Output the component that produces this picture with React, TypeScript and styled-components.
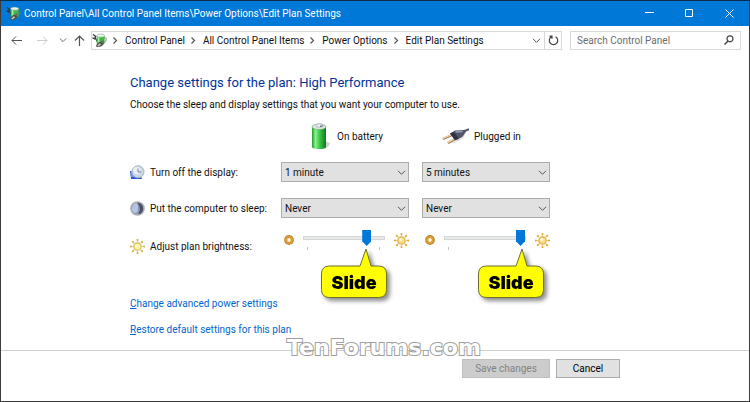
import React, { useState } from "react";
import styled, { createGlobalStyle } from "styled-components";

const GlobalStyle = createGlobalStyle`
  * { box-sizing: border-box; }
  html, body, #root { height: 100%; }
  body {
    margin: 0;
    font-family: Roboto, "Open Sans", sans-serif;
    font-size: 10px;
    line-height: 17px;
    color: #111;
    background: #fff;
  }
  button, input, select { font: inherit; color: inherit; }
  svg { flex-shrink: 0; }
`;

const Window = styled.div`
  min-height: 100%;
  display: flex;
  flex-direction: column;
  border: 1px solid #3c3c3c;
  border-top-color: #0c2b48;
  background: #fff;
`;

const TitleBar = styled.header`
  display: flex;
  align-items: center;
  height: 25px;
  padding-left: 5px;
  gap: 3px;
  background: #0078d7;
  color: #fff;
`;

const Title = styled.h1`
  flex: 1;
  margin: 0;
  font-size: 10px;
  font-weight: 400;
  white-space: nowrap;
`;

const PlainButton = styled.button`
  display: flex;
  align-items: center;
  justify-content: center;
  padding: 0;
  border: 0;
  background: none;
`;

const CaptionButtons = styled.div`
  display: flex;
`;

const CaptionButton = styled(PlainButton)`
  width: 40px;
  height: 24px;
`;

const NavBar = styled.nav`
  display: flex;
  align-items: center;
  gap: 8px;
  height: 28px;
  padding: 0 8px 0 6px;
`;

const NavGroup = styled.div`
  display: flex;
  align-items: center;
  flex: 1;
`;

const NavButton = styled(PlainButton)<{ $width: number }>`
  flex-shrink: 0;
  width: ${(p) => p.$width}px;
  height: 20px;
`;

const AddressBar = styled.div`
  flex: 1;
  display: flex;
  align-items: center;
  height: 19px;
  border: 1px solid #d9d9d9;
`;

const Crumbs = styled.ol`
  flex: 1;
  display: flex;
  align-items: center;
  margin: 0;
  padding: 0;
  list-style: none;
`;

const Crumb = styled.li`
  display: flex;
  align-items: center;
  white-space: nowrap;
`;

const CrumbLink = styled.a`
  color: inherit;
  text-decoration: none;
`;

const Separator = styled.svg`
  width: 18px;
  height: 9px;
`;

const RefreshButton = styled(PlainButton)`
  width: 17px;
  height: 17px;
  border-left: 1px solid #d9d9d9;
`;

const SearchBox = styled.label`
  display: flex;
  align-items: center;
  width: 171px;
  height: 19px;
  padding: 0 6px;
  border: 1px solid #d9d9d9;
`;

const SearchInput = styled.input`
  flex: 1;
  min-width: 0;
  padding: 0;
  border: 0;
  outline: 0;
  background: none;
  &::placeholder { color: #6d6d6d; opacity: 1; }
`;

const Content = styled.main`
  flex: 1;
  padding: 19px 129px 0;
`;

const Heading = styled.h2`
  margin: 0;
  font-size: 13px;
  line-height: 20px;
  font-weight: 400;
  color: #003399;
`;

const Intro = styled.p`
  margin: 3px 0 0;
`;

const SettingsGrid = styled.div`
  display: grid;
  grid-template-columns: 138px 128px 128px;
  grid-template-rows: 36px 36px 36px 40px;
  column-gap: 13px;
  align-items: center;
  padding-top: 5px;
`;

const ColumnHeading = styled.div<{ $indent: number; $gap: number }>`
  display: flex;
  align-items: center;
  gap: ${(p) => p.$gap}px;
  padding-left: ${(p) => p.$indent}px;
  white-space: nowrap;
`;

const RowLabel = styled.label`
  display: flex;
  align-items: center;
  gap: 5px;
  white-space: nowrap;
`;

const SelectBox = styled.div`
  display: grid;
  align-items: center;
  & > * { grid-area: 1 / 1; }
  & > svg { justify-self: end; margin-right: 3px; pointer-events: none; }
`;

const Select = styled.select`
  width: 100%;
  height: 20px;
  padding: 0 20px 0 3px;
  border: 1px solid #adadad;
  border-radius: 0;
  background: #e1e1e1;
  appearance: none;
`;

const SliderCell = styled.div`
  position: relative;
  align-self: start;
  display: flex;
  align-items: center;
  gap: 9px;
  height: 28px;
  padding-left: 3px;
`;

const SliderBody = styled.div`
  width: 83px;
`;

const Range = styled.input`
  display: block;
  width: 100%;
  height: 16px;
  margin: 0;
  appearance: none;
  background: none;
  &::-webkit-slider-runnable-track {
    height: 4px;
    border: 1px solid #d6d6d6;
    background: #e7eaea;
  }
  &::-webkit-slider-thumb {
    appearance: none;
    width: 9px;
    height: 16px;
    margin-top: -7px;
    background: #0078d7;
    clip-path: polygon(0 0, 100% 0, 100% 70%, 50% 100%, 0 70%);
  }
`;

const Ticks = styled.div<{ $end: boolean }>`
  height: 3px;
  margin: 1px 5px 0 4px;
  border: 0 solid #c4c4c4;
  border-left-width: 1px;
  border-right-width: ${(p) => (p.$end ? 1 : 0)}px;
`;

const Callout = styled.div<{ $left: number }>`
  position: absolute;
  top: 22px;
  left: ${(p) => p.$left}px;
  width: 66px;
  height: 50px;
  padding-top: 18px;
  filter: drop-shadow(3px 3px 2px rgba(0, 0, 0, 0.45));
  font: 900 18px/34px Inter, "DejaVu Sans", sans-serif;
  text-align: center;
  color: #000;
  & > svg { position: absolute; inset: 0; }
  & > span { position: relative; }
`;

const Links = styled.div`
  display: flex;
  flex-direction: column;
  align-items: flex-start;
  gap: 9px;
  margin-top: 29px;
`;

const ActionLink = styled.a`
  display: inline-block;
  color: #0066cc;
  text-decoration: none;
  &::first-letter { text-decoration: underline; }
`;

const Footer = styled.footer`
  position: relative;
  display: flex;
  justify-content: flex-end;
  gap: 6px;
  height: 51px;
  padding: 8px 129px 0;
  border-top: 1px solid #cfcfcf;
`;

const PushButton = styled.button<{ $width: number }>`
  width: ${(p) => p.$width}px;
  height: 19px;
  padding: 0;
  border: 1px solid #adadad;
  background: #e1e1e1;
  color: #000;
  &:disabled { border-color: #bfbfbf; background: #cccccc; color: #838383; }
`;

const Watermark = styled.div`
  position: absolute;
  top: -16px;
  left: calc(50% - 88px);
  font: 700 22px/26px "DejaVu Sans", sans-serif;
  color: #fff;
  -webkit-text-stroke: 2px #a0a0a0;
  paint-order: stroke fill;
`;

function PowerPlanIcon({ size }: { size: number }) {
  return (
    <svg width={size} height={size} viewBox="0 0 16 16" aria-hidden="true">
      <path d="M1 1.500 4.500 4M.5 5 3.500 6.500M3 4l2.500 5" stroke="#333" strokeWidth="1.300" fill="none" />
      <path d="M13 4.500c3 0 2.600 5 0 5.500" stroke="#777" fill="none" />
      <path d="M5 3v8c0 2.500 8.500 2.500 8.500 0V3z" fill="#42b843" />
      <path d="M7 4v6" stroke="#a4f0aa" strokeWidth="1.800" />
      <ellipse cx="9.200" cy="2.800" rx="4.200" ry="1.700" fill="#e9f3ea" stroke="#7a937e" strokeWidth=".5" />
      <path d="M4 14c1.500-3 3-4.500 6-5l2.500 2c-1 3-3 4-6.500 4z" fill="#4c5252" />
      <path d="m5.500 13.500 2.500-2.500 2 1-3 2.500z" fill="#c8c09a" />
      <path d="m9 9 3-1.500 1 2-2 1.500z" fill="#686f69" />
    </svg>
  );
}

function ChevronDown({ color = "#555", size = 9 }: { color?: string; size?: number }) {
  return (
    <svg width={size} height={size} viewBox="0 0 9 9" aria-hidden="true">
      <path d="m1 2.800 3.500 3.500L8 2.800" fill="none" stroke={color} />
    </svg>
  );
}

function BatteryIcon() {
  return (
    <svg width="20" height="27" viewBox="0 0 20 27" aria-hidden="true">
      <defs>
        <linearGradient id="cell">
          <stop offset="0" stopColor="#1f9a2d" />
          <stop offset=".25" stopColor="#8df08f" />
          <stop offset=".5" stopColor="#43cf4c" />
          <stop offset="1" stopColor="#0b7a1c" />
        </linearGradient>
      </defs>
      <path d="m14 18 5 2-2 4-5 2z" fill="#bbb" opacity=".7" />
      <path d="M1 4v20c0 2.700 14 2.700 14 0V4z" fill="url(#cell)" />
      <ellipse cx="8" cy="3.800" rx="7" ry="2.800" fill="#d8e9dc" stroke="#74a47b" strokeWidth=".6" />
      <ellipse cx="8.500" cy="2.500" rx="3.500" ry="1.700" fill="#f3f3f8" stroke="#8b8ba2" strokeWidth=".6" />
      <path d="M9 2.500h3l-1 1.500H9z" fill="#777792" />
    </svg>
  );
}

function PlugIcon() {
  return (
    <svg width="28" height="17" viewBox="0 0 28 17" aria-hidden="true">
      <path d="M4 15.500 19 9l5-5-2 6-9 5z" fill="#ccc" opacity=".5" />
      <path d="m1 11 9-4M6 15l7-4" stroke="#9a7654" strokeWidth="2.400" />
      <path d="m1 10.500 9-4M6 14.400l7-4" stroke="#f2d8b6" strokeWidth="1.300" />
      <path d="M8 5.500 13 2.500l9-.5c2-.8 4-1.500 5-1.500v2c-2 0-3 1-4 2.500-1.500 3-3.500 5-6 5.500l-4 1.500z" fill="#505468" />
      <path d="m8 5.500 4-1.500 5 7-4 1.300z" fill="#303347" />
      <path d="m13.500 4 7-.5" stroke="#9a9fb4" strokeWidth="1.300" />
    </svg>
  );
}

function DisplayClockIcon() {
  return (
    <svg width="15" height="15" viewBox="0 0 15 15" aria-hidden="true">
      <path d="M0 6 9 6l3 8H1z" fill="#2b58cf" />
      <path d="M1 6h4v6H1z" fill="#6f9cec" />
      <circle cx="8" cy="6.800" r="6" fill="#cbd9e5" stroke="#a3b2c0" />
      <circle cx="7" cy="5.500" r="3.800" fill="#f2f7fb" opacity=".7" />
      <path d="M8 3.500V7h3.200" fill="none" stroke="#6d8498" />
    </svg>
  );
}

function MoonIcon() {
  return (
    <svg width="15" height="15" viewBox="0 0 15 15" aria-hidden="true">
      <circle cx="7.500" cy="7.500" r="6.600" fill="#8797b5" stroke="#b0b0b0" strokeWidth="1.500" />
      <path d="M7 1.800a5.700 5.700 0 1 1 1 11.400c3-3 2.500-8-1-11.400z" fill="#4a5164" />
      <path d="M6 2a6 6 0 0 0-3 9c2 2 5 1 5-3S8 3 6 2z" fill="#b4c4e2" />
    </svg>
  );
}

function SunIcon({ warm = false }: { warm?: boolean }) {
  const rays = [0, 45, 90, 135, 180, 225, 270, 315];
  return (
    <svg width="15" height="15" viewBox="0 0 15 15" aria-hidden="true">
      {rays.map((a) => (
        <path key={a} d="M6.500 0h2l-.4 2.600h-1.200z" fill={warm ? "#dfa92f" : "#cdb244"} transform={`rotate(${a} 7.500 7.500)`} />
      ))}
      <circle cx="7.500" cy="7.500" r="3.700" fill={warm ? "#f8dc86" : "#fff3a8"} stroke={warm ? "#e0ae4a" : "#d6bb50"} strokeWidth="1.200" />
      <circle cx="6.800" cy="6.500" r="1.500" fill="#fffbe2" />
    </svg>
  );
}

function DimIcon() {
  return (
    <svg width="10" height="10" viewBox="0 0 10 10" aria-hidden="true">
      <circle cx="5" cy="5" r="3.400" fill="#fff3d0" stroke="#c58a25" strokeWidth="3" />
      <circle cx="5" cy="5" r="3.200" fill="none" stroke="#e2ae4d" />
    </svg>
  );
}

function BubbleShape({ tip, base }: { tip: number; base: number }) {
  return (
    <svg width="66" height="50" viewBox="0 0 66 50" aria-hidden="true">
      <path
        d={`M8.500 18H${base}L${tip} 1l5 17H57.500q8 0 8 8v15.500q0 8-8 8h-49q-8 0-8-8V26q0-8 8-8z`}
        fill="#ffff00"
        stroke="#6f6f35"
      />
    </svg>
  );
}

interface DurationSelectProps {
  id?: string;
  label: string;
  initial: string;
}

function DurationSelect({ id, label, initial }: DurationSelectProps) {
  return (
    <SelectBox>
      <Select id={id} aria-label={label} defaultValue={initial}>
        <option>1 minute</option>
        <option>5 minutes</option>
        <option>10 minutes</option>
        <option>Never</option>
      </Select>
      <ChevronDown />
    </SelectBox>
  );
}

interface BrightnessProps {
  id?: string;
  label: string;
  initial: number;
  calloutLeft: number;
  tip: number;
  base: number;
}

function Brightness({ id, label, initial, calloutLeft, tip, base }: BrightnessProps) {
  const [value, setValue] = useState(initial);
  return (
    <SliderCell>
      <DimIcon />
      <SliderBody>
        <Range
          id={id}
          type="range"
          aria-label={label}
          min={0}
          max={100}
          value={value}
          onChange={(e) => setValue(Number(e.target.value))}
        />
        <Ticks $end={value < 95} />
      </SliderBody>
      <SunIcon warm />
      <Callout $left={calloutLeft}>
        <BubbleShape tip={tip} base={base} />
        <span>Slide</span>
      </Callout>
    </SliderCell>
  );
}

const crumbs = ["Control Panel", "All Control Panel Items", "Power Options", "Edit Plan Settings"];

export default function App() {
  return (
    <Window>
      <GlobalStyle />
      <TitleBar>
        <PowerPlanIcon size={15} />
        <Title>Control Panel\All Control Panel Items\Power Options\Edit Plan Settings</Title>
        <CaptionButtons>
          <CaptionButton aria-label="Minimize">
            <svg width="9" height="9"><path d="M0 3.500h9" stroke="#fff" /></svg>
          </CaptionButton>
          <CaptionButton aria-label="Maximize">
            <svg width="9" height="9"><path d="M.5.5h7v7h-7z" fill="none" stroke="#fff" /></svg>
          </CaptionButton>
          <CaptionButton aria-label="Close">
            <svg width="9" height="9"><path d="m.5.5 8 8m0-8-8 8" stroke="#fff" /></svg>
          </CaptionButton>
        </CaptionButtons>
      </TitleBar>

      <NavBar>
        <NavGroup>
          <NavButton $width={20} aria-label="Back">
            <svg width="12" height="9"><path d="M11 4.500H1M5 .5l-4 4 4 4" fill="none" stroke="#555" /></svg>
          </NavButton>
          <NavButton $width={32} aria-label="Forward" disabled>
            <svg width="12" height="9"><path d="M0 4.500h10M6 .5l4 4-4 4" fill="none" stroke="#ccc" /></svg>
          </NavButton>
          <NavButton $width={8} aria-label="Recent locations"><ChevronDown size={8} /></NavButton>
          <NavButton $width={24} aria-label="Up">
            <svg width="11" height="11"><path d="M5.500 11V1M1 5.500 5.500 1 10 5.500" fill="none" stroke="#555" strokeWidth="1.200" /></svg>
          </NavButton>
          <AddressBar>
            <PowerPlanIcon size={15} />
            <Crumbs>
              {crumbs.map((name) => (
                <Crumb key={name}>
                  <Separator viewBox="0 0 18 9" aria-hidden="true">
                    <path d="m6.500 1.500 3 3-3 3" fill="none" stroke="#555" strokeWidth="1.200" />
                  </Separator>
                  <CrumbLink href="#">{name}</CrumbLink>
                </Crumb>
              ))}
            </Crumbs>
            <NavButton $width={16} aria-label="Previous locations"><ChevronDown /></NavButton>
            <RefreshButton aria-label="Refresh">
              <svg width="11" height="11" viewBox="0 0 11 11">
                <path d="M7.500 1.700a4.200 4.200 0 1 1-4 0M1.500 1.200h2.500v2.600" fill="none" stroke="#444" strokeWidth="1.200" />
              </svg>
            </RefreshButton>
          </AddressBar>
        </NavGroup>
        <SearchBox>
          <SearchInput type="text" aria-label="Search Control Panel" placeholder="Search Control Panel" />
          <svg width="10" height="10" viewBox="0 0 10 10" aria-hidden="true">
            <circle cx="6" cy="3.800" r="3" fill="none" stroke="#444" strokeWidth="1.200" />
            <path d="M4 6 .5 9.500" stroke="#444" strokeWidth="1.500" />
          </svg>
        </SearchBox>
      </NavBar>

      <Content>
        <Heading>Change settings for the plan: High Performance</Heading>
        <Intro>Choose the sleep and display settings that you want your computer to use.</Intro>

        <SettingsGrid>
          <span />
          <ColumnHeading $indent={30} $gap={6}>
            <BatteryIcon />
            On battery
          </ColumnHeading>
          <ColumnHeading $indent={20} $gap={4}>
            <PlugIcon />
            Plugged in
          </ColumnHeading>

          <RowLabel htmlFor="display-battery"><DisplayClockIcon />Turn off the display:</RowLabel>
          <DurationSelect id="display-battery" label="Turn off the display, on battery" initial="1 minute" />
          <DurationSelect label="Turn off the display, plugged in" initial="5 minutes" />

          <RowLabel htmlFor="sleep-battery"><MoonIcon />Put the computer to sleep:</RowLabel>
          <DurationSelect id="sleep-battery" label="Put the computer to sleep, on battery" initial="Never" />
          <DurationSelect label="Put the computer to sleep, plugged in" initial="Never" />

          <RowLabel htmlFor="brightness-battery"><SunIcon />Adjust plan brightness:</RowLabel>
          <Brightness id="brightness-battery" label="Brightness, on battery" initial={82} calloutLeft={40} tip={45} base={39} />
          <Brightness label="Brightness, plugged in" initial={100} calloutLeft={56} tip={44} base={38} />
        </SettingsGrid>

        <Links>
          <ActionLink href="#">Change advanced power settings</ActionLink>
          <ActionLink href="#">Restore default settings for this plan</ActionLink>
        </Links>
      </Content>

      <Footer>
        <PushButton $width={88} disabled>Save changes</PushButton>
        <PushButton $width={64}>Cancel</PushButton>
        <Watermark>TenForums.com</Watermark>
      </Footer>
    </Window>
  );
}
